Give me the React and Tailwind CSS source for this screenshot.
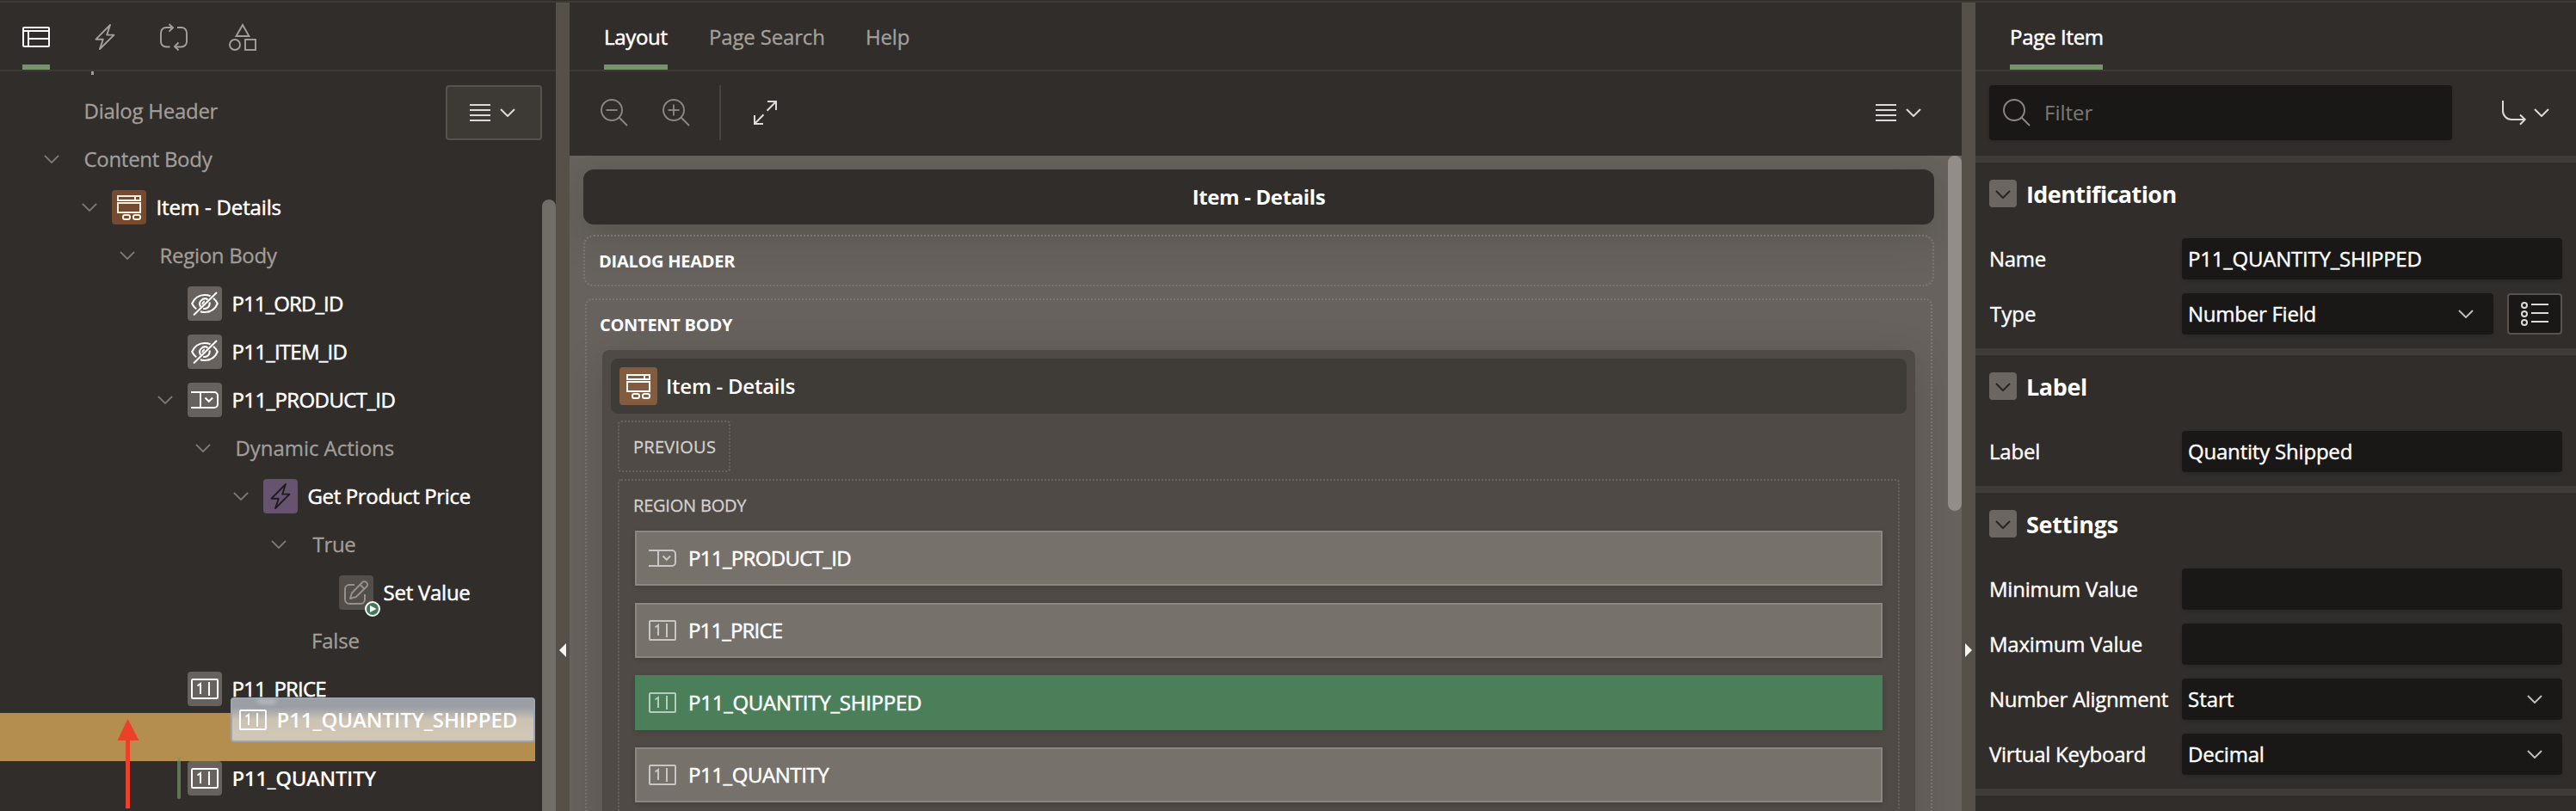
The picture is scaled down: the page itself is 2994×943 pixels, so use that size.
import React from "react";

const S = ({ w, h, children, className = "", sw = 2 }) => (
  <svg
    width={w}
    height={h}
    viewBox={`0 0 ${w} ${h}`}
    fill="none"
    stroke="currentColor"
    strokeWidth={sw}
    className={`block shrink-0 ${className}`}
  >
    {children}
  </svg>
);

const Chevron = ({ className = "" }) => (
  <S w={18} h={10} className={className}>
    <path d="M1 1l8 8 8-8" />
  </S>
);

const ListIcon = () => (
  <S w={24} h={20}>
    <path d="M0 1h24M0 7h24M0 13h24M0 19h24" />
  </S>
);

const PageIcon = () => (
  <S w={32} h={24} className="text-white">
    <rect x="1" y="1" width="30" height="22" rx="1" />
    <path d="M1 5h30M7 5v18M7 14h24" />
  </S>
);

const Bolt = ({ className = "" }) => (
  <S w={24} h={32} className={className} sw={1.9}>
    <path d="M18 2L1.5 18.7h8.3L6 30 22.5 13.6h-8.3z" strokeLinejoin="round" />
  </S>
);

const CycleIcon = () => (
  <S w={32} h={32} sw={1.9}>
    <path d="M14 5H7a6 6 0 0 0-6 6v10.500a6 6 0 0 0 6 6h4.500M20 5h5a6 6 0 0 1 6 6v10.500a6 6 0 0 1-6 6h-7" />
    <path d="M10.500 1l4.500 4.300-4.500 4.300M21.500 22.500l-4.500 4.500 4.500 4.500" />
  </S>
);

const ShapesIcon = () => (
  <S w={32} h={32} sw={1.9}>
    <path d="M16 2l7.500 13h-15z" />
    <circle cx="7" cy="25" r="6" />
    <rect x="19" y="19" width="12" height="12" />
  </S>
);

const FormIcon = () => (
  <S w={28} h={29}>
    <rect x="1" y="1" width="26" height="5" />
    <path d="M21 1v5" />
    <rect x="1" y="9" width="26" height="11" />
    <rect x="7" y="23" width="8" height="5" rx="2" />
    <rect x="19" y="23" width="8" height="5" rx="2" />
  </S>
);

const EyeOff = () => (
  <S w={32} h={28}>
    <path d="M22.500 5.200C20.500 4.400 18.300 4 16 4 9.500 4 4 7.500 1.200 14c1.200 2.600 2.900 4.700 5 6.300M26 7.800c2 1.600 3.700 3.700 4.800 6.200C28 20.500 22.500 24 16 24c-1.800 0-3.600-.3-5.200-.8" />
    <path d="M19.500 9.300a6 6 0 0 0-8.300 8.300M21.500 12.500a6 6 0 0 1-7.300 7.300M16 11.500a3 3 0 0 0-2.500 3.500" />
    <path d="M30 1L3 27.500" />
  </S>
);

const ComboIcon = ({ className = "" }) => (
  <S w={32} h={22} className={className}>
    <path d="M0 2h27a4 4 0 0 1 4 4v10a4 4 0 0 1-4 4H0M11 2v18" />
    <path d="M16.500 8.500l4.300 4.300 4.300-4.300" />
  </S>
);

const NumIcon = ({ className = "" }) => (
  <S w={32} h={24} className={className}>
    <rect x="1" y="1" width="30" height="22" rx="1" />
    <path d="M7.500 8.500L11 6v12M21 4v16" />
  </S>
);

const EditIcon = () => (
  <S w={28} h={30} className="text-[#94908c]">
    <path d="M12 6H6a5 5 0 0 0-5 5v12a5 5 0 0 0 5 5h13a5 5 0 0 0 5-5v-6" />
    <path d="M7 22l2-6.500L21 3.200a3.500 3.500 0 0 1 5 5L14 20z M18.500 5.800l5 5" strokeLinejoin="round" />
  </S>
);

const Magnifier = ({ sign }) => (
  <S w={32} h={32} sw={1.9}>
    <circle cx="13" cy="13" r="12" />
    <path d="M21.500 21.500L31 31" />
    {sign && <path d="M6.500 13h13" />}
    {sign === "+" && <path d="M13 6.500v13" />}
  </S>
);

const box = {
  gray: "bg-[#67625d] text-white",
  dim: "bg-[#534e4a]",
  brown: "bg-[#764931] text-[#fdf3e3]",
  purple: "bg-[#65536f] text-[#201c1a]",
};

const IconBox = ({ tone, children }) => (
  <div className={`relative flex h-10 w-10 shrink-0 items-center justify-center rounded ${box[tone]}`}>{children}</div>
);

const Node = ({ pad, open, icon, tone, label, cls = "", h = "h-14" }) => (
  <div className={`flex shrink-0 items-center whitespace-nowrap ${h} ${pad}`}>
    {open && <Chevron className={`text-[#7a7571] ${icon ? "mr-[17px]" : "mr-[28.5px]"}`} />}
    {icon && <IconBox tone={tone}>{icon}</IconBox>}
    <span
      className={`${icon ? "ml-[11.5px] text-white" : "text-[#a19e9a] [-webkit-text-stroke:0.3px_#a19e9a]"} ${
        icon && !cls.includes("font-") ? "[-webkit-text-stroke:0.5px_#fff]" : ""
      } ${cls}`}
    >
      {label}
    </span>
  </div>
);

const TreePanel = () => (
  <section className="relative flex h-full w-[646px] shrink-0 flex-col overflow-hidden">
    <div className="flex h-20 shrink-0 items-end gap-[52px] border-b-2 border-[#3d3a36] pl-[26px] text-[#a3a09c]">
      <div className="flex h-[78px] w-8 flex-col justify-between pt-7">
        <PageIcon />
        <div className="h-1.5 bg-[#759469]" />
      </div>
      <Bolt className="mb-[22px]" />
      <div className="mb-[22px]"><CycleIcon /></div>
      <div className="-ml-1 mb-[22px]"><ShapesIcon /></div>
    </div>
    <div className="flex h-[18px] shrink-0 pl-[106px]">
      <div className="h-1 w-[3px] bg-[#a19e9a]" />
    </div>
    <Node pad="pl-[97.5px]" label="Dialog Header" cls="tracking-[-0.26px]" />
    <Node pad="pl-[51px]" open label="Content Body" cls="tracking-[-0.3px]" />
    <Node pad="pl-[95px]" open icon={<FormIcon />} tone="brown" label="Item - Details" cls="tracking-[-0.15px]" />
    <Node pad="pl-[139px]" open label="Region Body" cls="tracking-[-0.3px]" />
    <Node pad="pl-[218px]" icon={<EyeOff />} tone="gray" label="P11_ORD_ID" cls="tracking-[-0.9px]" />
    <Node pad="pl-[218px]" icon={<EyeOff />} tone="gray" label="P11_ITEM_ID" cls="tracking-[-0.75px]" />
    <Node pad="pl-[183px]" open icon={<ComboIcon />} tone="gray" label="P11_PRODUCT_ID" cls="tracking-[-0.6px]" />
    <Node pad="pl-[227px]" open label="Dynamic Actions" cls="tracking-[-0.05px]" />
    <Node pad="pl-[271px]" open icon={<Bolt />} tone="purple" label="Get Product Price" cls="tracking-[-0.36px]" />
    <Node pad="pl-[315px]" open label="True" cls="pl-0.5 tracking-[-0.3px]" />
    <Node
      pad="pl-[394px]"
      icon={
        <>
          <EditIcon />
          <svg className="absolute -bottom-2 -right-2" width="18" height="18" viewBox="0 0 18 18">
            <circle cx="9" cy="9" r="8" fill="#3f7a54" stroke="#fff" strokeWidth="2" />
            <path d="M6 5l7.500 4L6 13z" fill="#fff" />
          </svg>
        </>
      }
      tone="dim"
      label="Set Value"
      cls="tracking-[-0.25px]"
    />
    <Node pad="pl-[362px]" label="False" cls="tracking-[-0.2px]" />
    <Node pad="pl-[218px]" icon={<NumIcon />} tone="gray" label="P11_PRICE" cls="tracking-[-0.85px]" />
    <div className="h-14 w-[622px] shrink-0 bg-[#b38e4f]" />
    <Node pad="pl-[218px]" h="h-10" icon={<NumIcon />} tone="gray" label="P11_QUANTITY" cls="font-semibold tracking-[-0.42px]" />

    <button className="absolute left-[518px] top-24 flex h-16 w-28 items-center gap-[11px] rounded border-2 border-[#57524d] bg-[#3d3a35] pl-[26px] text-[#dcdad8]">
      <ListIcon />
      <Chevron />
    </button>
    <div className="absolute bottom-0 right-0 top-[229px] w-4 rounded-t-full bg-[#716d69]" />
    <div className="absolute left-[206px] top-[878px] h-12 w-1 rounded bg-[#759469]/70" />
    <div className="absolute left-[268px] top-[808px] flex h-[52px] w-[354px] items-center whitespace-nowrap rounded border-2 border-[#9aa6b6] bg-linear-to-b from-[#9b9fa5] from-20% via-[#cdc3b4] via-50% to-[#d2c8b7] pl-2 text-white">
      <div className="absolute left-7 top-0 h-1.5 w-6 rounded-b-full bg-white/25 blur-[2px]" />
      <NumIcon />
      <span className="ml-[11.5px] font-semibold tracking-[-0.1px]">P11_QUANTITY_SHIPPED</span>
    </div>
    <svg className="absolute left-[136px] top-[833px]" width="26" height="104" viewBox="0 0 26 104">
      <path d="M12.500 0L25.500 25H15v79h-5V25H.500z" fill="#ea4128" />
    </svg>
  </section>
);

const Splitter = ({ dir }) => (
  <div className="flex h-full w-4 shrink-0 flex-col items-center bg-[#56504b] pt-[745px]">
    <svg width="8" height="16" viewBox="0 0 8 16" fill="#f5f4f2">
      <path d={dir === "left" ? "M8 0v16L0 8z" : "M0 0v16l8-8z"} />
    </svg>
  </div>
);

const Tab = ({ label, active, cls = "" }) => (
  <div
    className={`flex h-[78px] items-center whitespace-nowrap border-b-[6px] pt-[7px] ${
      active
        ? "border-[#759469] text-white [-webkit-text-stroke:0.5px_#fff]"
        : "border-transparent text-[#a3a09c] [-webkit-text-stroke:0.3px_#a3a09c]"
    } ${cls}`}
  >
    {label}
  </div>
);

const items = [
  { label: "P11_PRODUCT_ID", combo: true, cls: "tracking-[-0.66px]" },
  { label: "P11_PRICE", cls: "tracking-[-0.85px]" },
  { label: "P11_QUANTITY_SHIPPED", on: true, cls: "tracking-[-0.24px]" },
  { label: "P11_QUANTITY", cls: "tracking-[-0.42px]" },
];

const LayoutPanel = () => (
  <section className="flex h-full w-[1618px] shrink-0 flex-col overflow-hidden">
    <div className="flex h-20 shrink-0 items-end border-b-2 border-[#3d3a36] pl-10">
      <Tab label="Layout" active cls="w-[74px] tracking-[-0.3px]" />
      <Tab label="Page Search" cls="ml-[48px] w-[134px] tracking-[-0.16px]" />
      <Tab label="Help" cls="ml-12 tracking-[-0.2px]" />
    </div>
    <div className="flex h-[98px] shrink-0 items-start pl-9 pr-[47px] pt-4 text-[#8b8681]">
      <div className="flex h-16 items-center gap-10">
        <Magnifier sign="-" />
        <Magnifier sign="+" />
      </div>
      <div className="ml-[34px] h-16 w-0.5 bg-[#47433f]" />
      <div className="ml-[38px] mt-[18px] text-[#dcdad8]">
        <S w={27} h={28}>
          <path d="M16 1h10v10M26 1L15.500 11.800M11 27H1V17M1 27l10.500-10.800" />
        </S>
      </div>
      <div className="ml-auto flex h-16 items-center gap-[11px] text-[#dcdad8]">
        <ListIcon />
        <Chevron />
      </div>
    </div>
    <div className="flex min-h-0 flex-1 overflow-hidden bg-[#67625d]">
      <div className="flex w-[1602px] flex-col px-4 pt-4">
        <div className="flex h-16 shrink-0 items-center justify-center rounded-xl bg-[#312d2a] font-bold tracking-[-0.36px] text-white shadow-[0_12px_48px_rgba(0,0,0,0.16)]">
          Item - Details
        </div>
        <div className="mt-3 flex h-[60px] shrink-0 items-center rounded-xl border-2 border-dotted border-[#7b7671] pl-4 pt-px text-[20px] font-bold tracking-[-0.27px] text-white">
          DIALOG HEADER
        </div>
        <div className="mx-0.5 mt-3.5 flex h-[700px] shrink-0 flex-col rounded-lg border-2 border-dotted border-[#7b7671] px-[18px]">
          <div className="flex h-[58px] items-center pb-px text-[20px] font-bold tracking-[-0.27px] text-white">
            <span className="-ml-[3px]">CONTENT BODY</span>
          </div>
          <div className="flex flex-1 flex-col rounded-lg bg-[#4f4a46] px-2 pt-2.5 shadow-[0_12px_48px_rgba(0,0,0,0.16)]">
            <div className="mx-0.5 flex h-16 shrink-0 items-center rounded-lg bg-[#3f3b36] pl-2.5">
              <div className="flex h-11 w-11 items-center justify-center rounded bg-[#835c3f] text-white">
                <FormIcon />
              </div>
              <span className="ml-[10px] font-semibold tracking-[-0.25px] text-white">Item - Details</span>
            </div>
            <div className="ml-2.5 mt-2 flex h-[60px] w-[131px] shrink-0 items-center rounded border-2 border-dotted border-[#69635f] pl-4 pt-px text-[20px] tracking-[0.25px] text-[#d5d2cf] [-webkit-text-stroke:0.3px_#d5d2cf]">
              PREVIOUS
            </div>
            <div className="mx-2.5 mt-2 flex flex-1 flex-col rounded border-2 border-dotted border-[#69635f] px-[18px]">
              <div className="flex h-[58px] shrink-0 items-center text-[20px] tracking-[-0.21px] text-[#d5d2cf] [-webkit-text-stroke:0.3px_#d5d2cf]">
                <span className="-ml-0.5">REGION BODY</span>
              </div>
              <div className="flex flex-col gap-5">
                {items.map((it) => (
                  <div
                    key={it.label}
                    className={`flex h-16 shrink-0 items-center border-2 pl-3.5 text-white shadow-[0_2px_6px_rgba(0,0,0,0.14)] ${
                      it.on ? "border-[#4a7f59] bg-[#4a7f59]" : "border-[#8b8681] bg-[#77716c]"
                    }`}
                  >
                    {it.combo ? <ComboIcon className="opacity-60" /> : <NumIcon className="opacity-60" />}
                    <span className={`ml-[14px] [-webkit-text-stroke:0.5px_#fff] ${it.cls}`}>{it.label}</span>
                  </div>
                ))}
              </div>
            </div>
          </div>
        </div>
      </div>
      <div className="h-[413px] w-4 rounded-full bg-[#928d89]" />
    </div>
  </section>
);

const Group = ({ title, cls = "", children }) => (
  <div className="flex shrink-0 flex-col border-t-8 border-[#3f3b36] px-4 pb-4 pt-5">
    <div className="flex h-8 items-center">
      <div className="flex h-8 w-8 items-center justify-center rounded bg-[#6b6661] pt-0.5 text-[#282422]">
        <Chevron />
      </div>
      <span className={`ml-[11px] pt-px text-[27px] font-bold leading-8 ${cls}`}>{title}</span>
    </div>
    <div className="mt-9 flex flex-col gap-4">{children}</div>
  </div>
);

const Field = ({ label, value, select, extra, cls = "", vcls = "" }) => (
  <div className="flex h-12 items-center whitespace-nowrap [-webkit-text-stroke:0.4px_#fff]">
    <div className={`w-[224px] shrink-0 ${cls}`}>{label}</div>
    <div className="flex h-12 flex-1 items-center justify-between rounded bg-[#1a1816] pl-[7px] pr-[23px] shadow-[0_2px_4px_rgba(0,0,0,0.12)]">
      <span className={vcls}>{value}</span>
      {select && <Chevron className="text-[#bdbab7]" />}
    </div>
    {extra && (
      <button className="ml-4 flex h-12 w-16 items-center justify-center rounded border-2 border-[#57524d] bg-[#1a1816] text-[#dcdad8]">
        <S w={32} h={28}>
          <circle cx="4" cy="4" r="3" />
          <circle cx="4" cy="14" r="3" />
          <circle cx="4" cy="24" r="3" />
          <path d="M12 3h20M12 13h20M12 23h20" />
        </S>
      </button>
    )}
  </div>
);

const PropertyPanel = () => (
  <section className="flex h-full w-[698px] shrink-0 flex-col overflow-hidden text-white">
    <div className="flex h-20 shrink-0 items-end border-b-2 border-[#3d3a36] pl-10">
      <Tab label="Page Item" active cls="w-[108px] tracking-[-0.3px]" />
    </div>
    <div className="flex h-[98px] shrink-0 items-start pl-4 pt-4">
      <div className="flex h-16 w-[538px] items-center rounded bg-[#1a1816] pl-4 text-[#8b8681] shadow-[0_2px_4px_rgba(0,0,0,0.12)]">
        <Magnifier />
        <span className="ml-4 text-[#7d7874]">Filter</span>
      </div>
      <div className="ml-[58px] flex h-16 items-center gap-[9px] text-[#dcdad8]">
        <S w={28} h={30}>
          <path d="M1 1v12a10 10 0 0 0 10 10h15M21 17.500l5.700 5.500-5.700 5.700" />
        </S>
        <Chevron />
      </div>
    </div>
    <Group title="Identification" cls="tracking-[-0.6px]">
      <Field label="Name" value="P11_QUANTITY_SHIPPED" cls="tracking-[-0.3px]" vcls="tracking-[-0.22px]" />
      <Field label="Type" value="Number Field" select extra cls="pl-px" vcls="tracking-[-0.25px]" />
    </Group>
    <Group title="Label" cls="tracking-[-0.4px]">
      <Field label="Label" value="Quantity Shipped" cls="tracking-[-0.2px]" vcls="tracking-[-0.2px]" />
    </Group>
    <Group title="Settings" cls="tracking-[-0.25px]">
      <Field label="Minimum Value" cls="tracking-[-0.22px]" />
      <Field label="Maximum Value" cls="tracking-[-0.22px]" />
      <Field label="Number Alignment" value="Start" select cls="tracking-[-0.33px]" />
      <Field label="Virtual Keyboard" value="Decimal" select cls="tracking-[-0.25px]" vcls="tracking-[-0.2px]" />
    </Group>
    <div className="h-2 shrink-0 bg-[#3f3b36]" />
  </section>
);

export default function App() {
  return (
    <div className="h-[943px] w-[2994px] overflow-hidden bg-[#312d2a] pt-px font-['Open_Sans',sans-serif] text-[24px] leading-8">
      <div className="h-0.5 bg-[#3d3a36]" />
      <div className="flex h-[940px]">
        <TreePanel />
        <Splitter dir="left" />
        <LayoutPanel />
        <Splitter dir="right" />
        <PropertyPanel />
      </div>
    </div>
  );
}
